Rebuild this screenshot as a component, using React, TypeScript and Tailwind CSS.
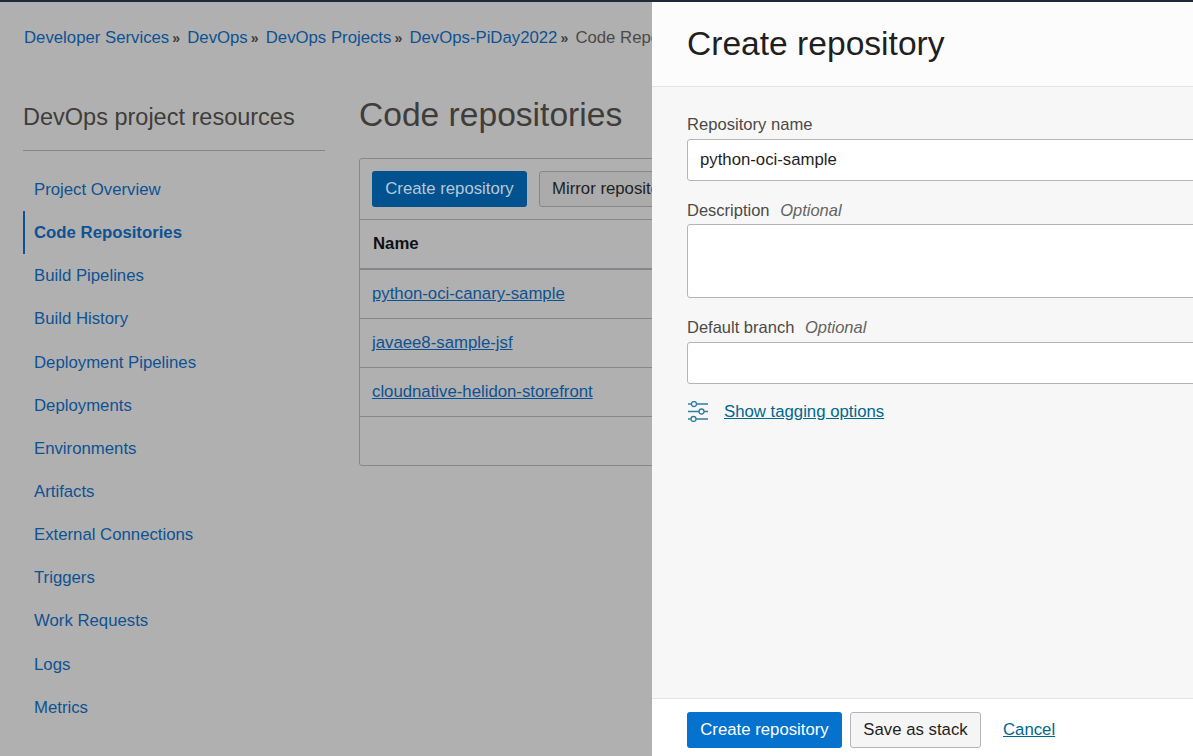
const crumbs = ["Developer Services", "DevOps", "DevOps Projects", "DevOps-PiDay2022"];
const menu = [
  "Project Overview",
  "Code Repositories",
  "Build Pipelines",
  "Build History",
  "Deployment Pipelines",
  "Deployments",
  "Environments",
  "Artifacts",
  "External Connections",
  "Triggers",
  "Work Requests",
  "Logs",
  "Metrics",
];
const repos = ["python-oci-canary-sample", "javaee8-sample-jsf", "cloudnative-helidon-storefront"];

function Sep() {
  return <span className="mr-[7.2px] ml-[3px] text-[14px] leading-none font-bold text-[#3f3d3a]">»</span>;
}

function TagIcon() {
  return (
    <svg width="22" height="21" viewBox="0 0 22 21" fill="none" stroke="#2f7f9f" strokeWidth="1.3">
      <circle cx="7" cy="3" r="2.5" />
      <path d="M1 3h3.5M9.5 3H21" />
      <circle cx="14.5" cy="10.5" r="2.5" />
      <path d="M1 10.5h11M17 10.5h4" />
      <circle cx="6.5" cy="18" r="2.5" />
      <path d="M1 18h3M9 18h12" />
    </svg>
  );
}

export default function App() {
  return (
    <div className="flex h-screen w-full flex-col overflow-hidden font-['Liberation_Sans',Arial,sans-serif] text-[16.75px]">
      <div className="h-[2px] shrink-0 bg-[#1f2a38]" />
      <div className="flex min-h-0 flex-1">
        {/* dimmed page */}
        <div className="w-[652px] shrink-0 overflow-hidden bg-[#b0b0b0]">
          <div className="w-[900px]">
            <nav className="flex h-[71px] items-center pl-[24px] whitespace-nowrap text-[#0e5293]">
              {crumbs.map((c) => (
                <span key={c} className="flex items-center">
                  {c}
                  <Sep />
                </span>
              ))}
              <span className="text-[#4c4a47]">Code Repositories</span>
            </nav>
            <div className="flex">
              <aside className="ml-[23px] w-[302px] shrink-0">
                <h2 className="mt-[27px] border-b border-[#85878a] pb-[16px] text-[23.5px] leading-[34px] text-[#3f3d3a]">
                  DevOps project resources
                </h2>
                <ul className="mt-[17px]">
                  {menu.map((m) => {
                    const active = m === "Code Repositories";
                    return (
                      <li
                        key={m}
                        className={
                          active
                            ? "flex h-[43.15px] items-center border-l-2 border-[#0e5293] pl-[9px] font-bold text-[#0e5293]"
                            : "flex h-[43.15px] items-center pl-[11px] text-[#0e5293]"
                        }
                      >
                        {m}
                      </li>
                    );
                  })}
                </ul>
              </aside>
              <main className="ml-[34px] w-[500px]">
                <h1 className="mt-[23px] text-[33.6px] leading-[38px] text-[#3f3d3a]">Code repositories</h1>
                <div className="mt-[24px] rounded-[3px] border border-[#85878a]">
                  <div className="flex h-[61px] items-center gap-3 border-b border-[#85878a] pb-px pl-3">
                    <button className="h-[36px] w-[155px] rounded-[3px] bg-[#01528f] text-[#b8c8d8]">
                      Create repository
                    </button>
                    <button className="h-[36px] rounded-[3px] border border-[#85878a] bg-[#ababab] px-[12px] whitespace-nowrap text-[#1f1f1f]">
                      Mirror repository
                    </button>
                  </div>
                  <div className="flex h-[50px] items-center border-b-2 border-[#85878a] pl-[13px] font-bold text-[#111111]">
                    Name
                  </div>
                  {repos.map((r) => (
                    <div key={r} className="flex h-[49px] items-center border-b border-[#85878a] pl-3">
                      <a className="text-[#0e5293] underline">{r}</a>
                    </div>
                  ))}
                  <div className="h-[48px]" />
                </div>
              </main>
            </div>
          </div>
        </div>

        {/* create repository panel */}
        <div className="flex min-w-0 flex-1 flex-col bg-[#f7f7f7]">
          <header className="flex h-[85px] shrink-0 items-center border-b border-[#e4e4e4] bg-[#fcfcfc] pb-[1px] pl-[35px]">
            <h2 className="text-[33.6px] leading-[40px] text-[#1f1f1f]">Create repository</h2>
          </header>
          <div className="flex-1 overflow-hidden pl-[35px]">
            <label className="mt-[28px] block text-[16.6px] leading-[20px] text-[#4c4a47]">Repository name</label>
            <div className="mt-[4px] flex h-[42px] w-[540px] items-center rounded-[3px] border border-[#b3b5bb] bg-white pl-3 text-[#1f1f1f]">
              python-oci-sample
            </div>
            <label className="mt-[19px] block text-[16.5px] leading-[20px] text-[#4c4a47]">
              Description <i className="ml-[6px] text-[#66645f]">Optional</i>
            </label>
            <div className="mt-[4px] h-[74px] w-[540px] rounded-[3px] border border-[#b3b5bb] bg-white" />
            <label className="mt-[19px] block text-[16.5px] leading-[20px] text-[#4c4a47]">
              Default branch <i className="ml-[6px] text-[#66645f]">Optional</i>
            </label>
            <div className="mt-[5px] h-[42px] w-[540px] rounded-[3px] border border-[#b3b5bb] bg-white" />
            <div className="mt-[15px] flex items-center gap-[15px]">
              <TagIcon />
              <a className="text-[#00688c] underline">Show tagging options</a>
            </div>
          </div>
          <footer className="flex h-[58px] shrink-0 items-center gap-2 border-t border-[#e4e4e4] bg-white pt-[4px] pl-[35px]">
            <button className="h-[36px] w-[155px] rounded-[3px] bg-[#0572ce] text-white">Create repository</button>
            <button className="h-[36px] w-[131px] rounded-[3px] border border-[#b3b5bb] bg-[#f5f5f5] text-[#1f1f1f]">
              Save as stack
            </button>
            <a className="ml-[14px] text-[#00688c] underline">Cancel</a>
          </footer>
        </div>
      </div>
    </div>
  );
}
